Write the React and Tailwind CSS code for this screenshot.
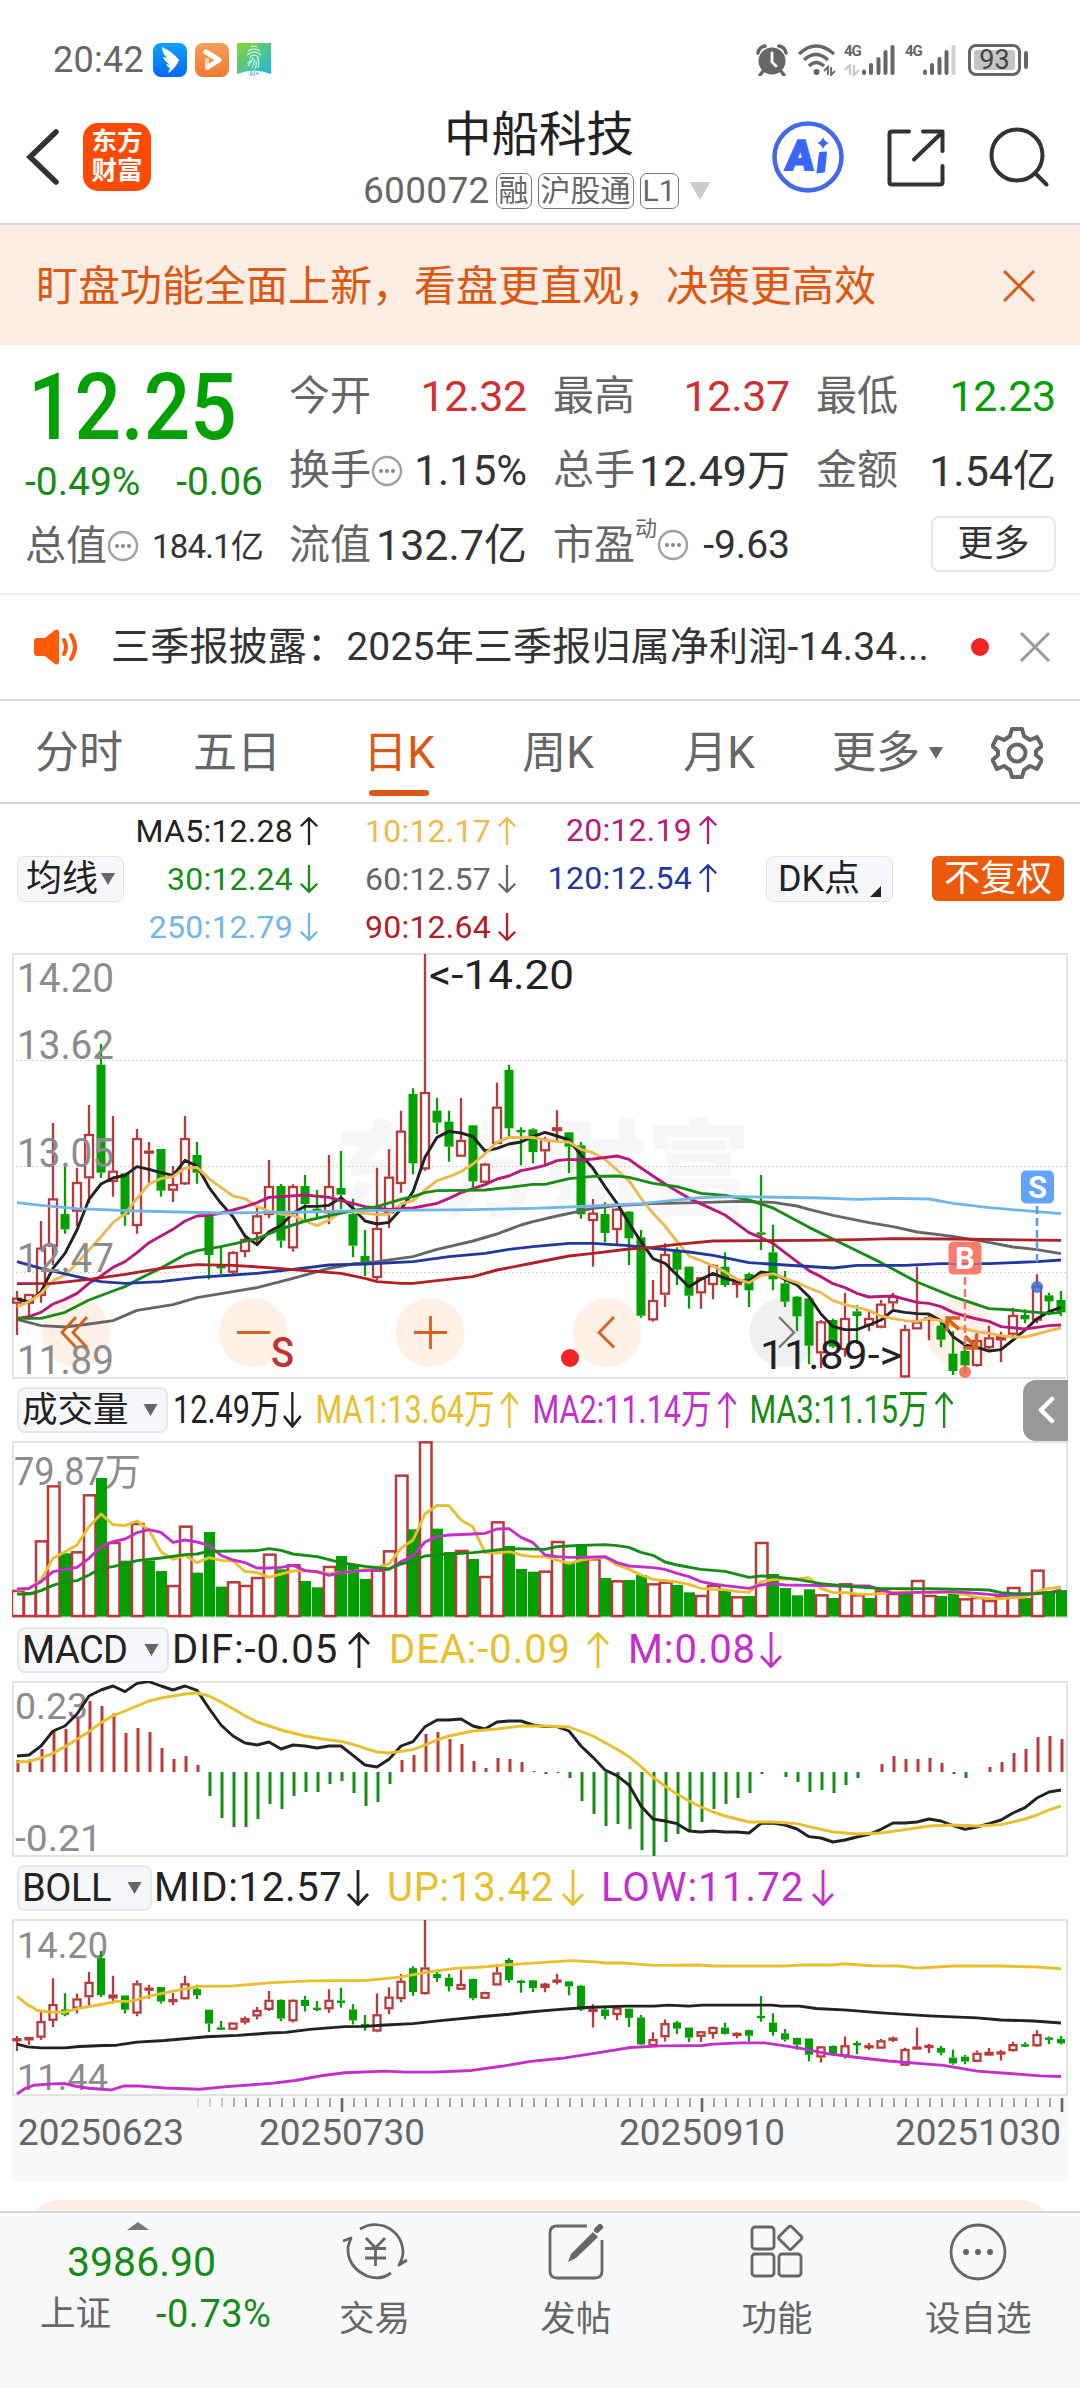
import React from 'react';

const RED = '#b93a38';
const GREEN = '#02a002';
const YELLOW = '#e8c02e';
const PURPLE = '#c42fcb';

// one slot per trading day
const dayX = (i) => 17 + i * 12;

// [high, body top, body bottom, low], third-pixel units; fifth value 1 = falling day
const candles = [
  [1053, 1073, 1091, 1185], [1062, 1062, 1091, 1130], [843, 923, 1068, 1088], [549, 775, 920, 975],
  [680, 822, 868, 881, 1], [683, 726, 815, 858], [495, 582, 715, 790], [312, 374, 698, 714, 1],
  [528, 692, 726, 770], [698, 700, 824, 857, 1], [567, 594, 858, 881], [606, 632, 639, 728],
  [627, 627, 752, 770, 1], [678, 732, 752, 786], [528, 594, 733, 735], [606, 645, 698, 731, 1],
  [824, 824, 945, 1018, 1], [922, 978, 984, 1002, 1], [934, 936, 998, 1002], [883, 897, 936, 952],
  [800, 826, 882, 910], [660, 738, 825, 835], [732, 738, 902, 923, 1], [733, 738, 925, 935],
  [705, 738, 792, 840, 1], [749, 806, 812, 838, 1], [645, 738, 820, 853], [633, 744, 764, 808, 1],
  [776, 822, 917, 952, 1], [870, 948, 972, 1008, 1], [683, 864, 1014, 1020], [628, 710, 820, 864],
  [512, 572, 732, 758], [445, 462, 670, 703, 1], [42, 456, 688, 692], [473, 512, 548, 582, 1],
  [512, 545, 620, 665, 1], [474, 600, 650, 650], [555, 556, 724, 742, 1], [668, 671, 728, 730],
  [428, 500, 612, 612], [374, 390, 565, 590, 1], [562, 570, 574, 676, 1], [565, 568, 636, 670, 1],
  [590, 597, 634, 672], [511, 562, 573, 604], [577, 577, 620, 699, 1], [606, 616, 823, 836, 1],
  [777, 818, 843, 980], [787, 822, 879, 907, 1], [804, 806, 870, 915], [814, 815, 895, 975, 1],
  [870, 892, 1127, 1133, 1], [1020, 1080, 1141, 1145], [910, 942, 1064, 1101], [922, 935, 989, 1035, 1],
  [980, 980, 1067, 1106, 1], [1010, 1012, 1060, 1106], [972, 975, 1035, 1078], [937, 980, 1035, 1041, 1],
  [1020, 1026, 1030, 1073], [998, 1002, 1051, 1101, 1], [705, 877, 884, 930, 1], [854, 937, 1018, 1051, 1],
  [993, 1030, 1085, 1101, 1], [1068, 1070, 1129, 1173, 1], [1074, 1075, 1217, 1273, 1], [1140, 1144, 1240, 1285],
  [1136, 1140, 1220, 1224, 1], [1058, 1134, 1230, 1250], [1096, 1114, 1128, 1212, 1], [1114, 1134, 1157, 1173],
  [1080, 1091, 1163, 1165], [1058, 1068, 1090, 1106], [1155, 1167, 1312, 1313], [980, 1145, 1168, 1168],
  [1120, 1132, 1136, 1201], [1140, 1157, 1199, 1222, 1], [1174, 1241, 1293, 1305, 1], [1218, 1233, 1276, 1300, 1],
  [1180, 1200, 1278, 1280], [1157, 1192, 1224, 1226], [1175, 1188, 1201, 1266], [1103, 1125, 1184, 1188],
  [1108, 1125, 1138, 1150, 1], [1003, 1037, 1142, 1150], [1058, 1066, 1084, 1126, 1], [1053, 1080, 1117, 1128, 1],
];

// [day, y] pairs
const maLines = [
  { color: '#666666', pts: '0,1138 2,1157 4,1161 6,1152 8,1142 10,1111 13,1094 15,1073 18,1055 20,1043 23,1015 26,985 28,972 30,965 33,950 35,928 38,903 40,882 42,855 43,845 45,828 48,805 50,797 53,791 57,788 60,784 63,787 65,798 66,808 68,826 71,848 73,860 75,876 78,889 81,907 83,921 85,929 87,941' },
  { color: '#222222', pts: '0,1077 1,1086 2,1055 3,985 4,940 5,870 6,778 7,732 8,714 9,706 10,680 11,688 12,698 13,706 14,661 15,678 16,742 17,790 18,830 19,888 20,914 21,875 22,856 23,820 24,799 25,799 26,796 27,773 28,805 29,843 30,852 31,847 32,808 33,755 34,652 35,592 36,574 37,579 38,590 39,633 40,625 41,612 42,606 43,590 44,577 45,588 46,600 47,645 48,685 49,740 50,790 51,850 52,905 53,956 54,970 55,1005 56,1041 57,1018 58,1000 59,1015 60,1024 61,1022 62,996 63,1000 64,1018 65,1035 66,1070 67,1122 68,1160 69,1169 70,1169 71,1155 72,1140 73,1111 74,1117 75,1121 76,1122 77,1142 78,1190 79,1215 80,1222 81,1233 82,1229 83,1200 84,1170 85,1136 86,1115 87,1102' },
  { color: '#efb94e', pts: '0,1101 1,1085 2,1060 3,1022 4,1005 5,970 6,930 7,890 8,848 9,822 10,775 11,732 12,716 13,710 14,684 15,682 16,716 17,742 18,768 19,776 20,800 21,813 22,822 23,826 24,843 25,857 26,840 27,817 28,815 29,820 30,824 31,822 32,792 33,782 34,750 35,722 36,710 37,695 38,672 39,642 40,607 41,592 42,593 43,592 44,600 45,605 46,606 47,628 48,638 49,658 50,690 51,722 52,775 53,820 54,858 55,905 56,948 57,962 58,978 59,995 60,1018 61,1028 62,1006 63,1001 64,1015 65,1028 66,1044 67,1058 68,1082 69,1094 70,1102 71,1112 72,1128 73,1136 74,1142 75,1145 76,1135 77,1142 78,1158 79,1167 80,1175 81,1180 82,1187 83,1191 84,1191 85,1182 86,1172 87,1164' },
  { color: '#b81a7c', pts: '0,1135 1,1130 2,1117 3,1092 4,1078 5,1060 6,1030 7,1008 8,982 9,965 10,938 11,908 12,888 13,868 14,843 15,828 16,826 17,819 18,810 19,800 20,788 21,772 22,770 24,765 26,772 27,782 28,790 29,800 31,808 33,804 35,790 36,775 37,758 38,746 39,734 40,717 41,708 42,692 43,685 44,676 45,662 46,658 47,660 48,657 50,648 51,658 52,684 54,732 56,775 58,808 59,825 61,878 62,893 63,910 64,938 65,965 66,992 67,1010 68,1031 69,1043 70,1060 71,1071 73,1068 75,1087 76,1090 77,1100 78,1117 79,1128 80,1137 81,1144 82,1160 84,1167 85,1162 86,1157 87,1155' },
  { color: '#188c18', pts: '0,1135 2,1135 4,1117 6,1080 8,1053 9,1040 10,1020 12,984 14,944 15,932 17,920 20,896 22,867 24,843 26,827 28,812 30,800 32,778 33,770 34,758 35,752 37,751 39,750 41,742 43,733 44,733 46,716 48,709 50,708 51,712 53,730 55,740 57,760 59,766 61,780 63,804 66,862 69,915 72,968 75,1026 78,1070 81,1106 83,1110 84,1114 86,1120 87,1118' },
  { color: '#23389f', pts: '0,965 2,985 5,1010 7,1025 9,1030 12,1025 15,1012 18,1005 20,1000 23,988 26,975 29,972 33,965 36,950 39,940 41,928 43,920 46,910 48,910 51,917 53,925 56,936 58,946 61,968 64,975 68,984 70,976 74,976 77,971 81,971 83,968 85,965 87,960' },
  { color: '#72b6e6', pts: '0,788 2,796 5,806 10,813 17,819 24,816 29,812 38,809 43,805 48,798 52,791 57,773 60,770 67,774 70,778 73,775 76,777 78,790 81,803 84,812 87,821' },
  { color: '#b02028', pts: '0,1031 3,1030 6,1018 9,1003 12,985 15,974 18,976 21,983 24,992 27,1000 29,1015 30,1025 32,1030 33,1030 35,1022 38,1010 40,990 43,969 46,948 48,940 51,927 53,922 55,913 58,903 62,902 66,901 70,899 73,896 78,897 82,899 87,901' },
];

// negative = falling volume bar
const volumes = [
  663, 670, 514, 349, -550, 547, 376, -324, 519, -572, 462, -572, -603, 648, 470, -608, -486, -650, 637, 648, 624, 554,
  -598, 586, -633, -652, 591, -558, -585, -627, 602, 544, 317, -478, 217, -476, -546, 543, -567, 621, 457, -528, -597,
  -605, 605, 516, -578, -523, 568, -624, 634, -630, -615, 643, 638, -645, -667, 678, 648, -660, 682, -678, 519, -612,
  -654, -676, -658, 676, -684, 643, 676, -684, 664, 672, -664, 633, 678, -678, -670, 688, 684, 693, 680, 654, -684, 602,
  -664, -660,
];

const volLines = [
  { color: YELLOW, pts: '0,660 1,656 2,630 3,565 4,545 5,525 6,470 7,432 8,464 9,467 10,453 11,480 12,545 13,568 14,556 15,578 16,563 17,571 18,573 19,604 20,608 21,622 22,612 23,603 24,602 25,606 26,610 27,608 28,604 29,598 30,592 31,582 32,535 33,510 34,432 35,406 36,407 37,450 38,471 39,548 40,549 41,545 42,555 43,560 44,560 45,570 46,580 47,570 48,565 49,562 50,585 51,598 52,615 53,628 54,632 55,636 56,643 57,655 58,658 59,659 60,665 61,667 62,635 63,629 64,627 65,627 66,623 67,655 68,668 69,668 70,672 71,673 72,671 73,667 74,665 76,668 78,668 79,674 80,682 81,686 82,686 83,683 84,681 85,664 86,655 87,651' },
  { color: PURPLE, pts: '0,657 1,655 2,635 3,605 4,598 5,592 6,565 7,530 8,515 9,507 10,488 11,479 12,487 13,517 14,510 15,516 16,526 17,556 18,570 19,578 20,594 21,594 22,592 23,586 24,602 25,605 26,616 27,608 28,604 29,602 31,598 32,575 33,558 34,516 35,500 36,495 38,492 39,490 40,477 41,476 42,502 43,518 44,555 45,560 46,562 47,562 49,560 50,578 51,588 53,593 54,598 55,610 56,620 57,635 58,642 59,647 61,655 62,645 63,641 64,645 66,646 69,648 71,648 73,670 75,667 78,665 80,670 82,676 84,674 86,668 87,660' },
  { color: '#168c16', pts: '0,672 1,672 2,662 3,646 4,635 5,632 6,615 7,595 8,590 9,582 10,572 12,564 14,554 15,552 16,544 20,542 21,536 22,541 23,552 25,560 27,578 29,589 31,597 32,582 33,572 34,558 36,552 38,548 40,540 41,536 44,538 45,530 46,528 47,526 49,524 50,527 51,532 52,547 53,556 54,576 55,585 57,598 59,604 60,613 61,622 62,618 63,620 65,628 67,641 69,648 72,656 76,656 80,659 81,660 82,668 83,671 85,670 87,665' },
];

const macdBars = [
  1170, 1168, 1137, 1080, 1077, 1045, 993, 1008, 1030, 1089, 1074, 1086, 1134, 1167, 1158, 1185, 1278, 1344, 1371, 1371,
  1347, 1302, 1317, 1278, 1266, 1266, 1242, 1233, 1269, 1308, 1296, 1242, 1170, 1155, 1092, 1086, 1107, 1122, 1173, 1194,
  1164, 1167, 1176, 1203, 1212, 1209, 1224, 1293, 1332, 1368, 1362, 1377, 1440, 1458, 1416, 1392, 1386, 1356, 1317, 1302,
  1284, 1269, 1212, 1206, 1221, 1236, 1266, 1260, 1269, 1245, 1224, 1206, 1182, 1158, 1167, 1167, 1164, 1179, 1212, 1224,
  1206, 1191, 1176, 1149, 1137, 1101, 1098, 1107,
];

const macdLines = [
  { color: '#222222', pts: '0,1158 1,1155 2,1128 3,1083 4,1068 5,1032 6,978 7,960 8,948 9,965 10,940 11,935 12,948 13,960 14,948 15,961 16,1015 17,1065 18,1098 19,1119 20,1125 21,1116 22,1137 23,1125 24,1128 25,1134 26,1128 27,1128 28,1156 29,1185 30,1191 31,1168 32,1128 33,1115 34,1070 35,1050 36,1050 37,1047 38,1068 39,1077 40,1056 41,1053 42,1053 43,1065 44,1070 45,1070 46,1083 47,1128 48,1162 49,1200 50,1217 51,1245 52,1308 53,1347 54,1353 55,1361 56,1383 57,1386 58,1383 59,1386 60,1386 61,1389 62,1360 63,1359 64,1365 65,1377 66,1400 67,1404 68,1416 69,1410 70,1401 71,1393 72,1378 73,1359 74,1359 75,1356 76,1347 77,1353 78,1367 79,1378 80,1371 81,1361 82,1350 83,1329 84,1313 85,1284 86,1266 87,1260' },
  { color: YELLOW, pts: '0,1176 1,1174 2,1164 3,1150 4,1130 5,1108 6,1085 7,1058 8,1037 9,1023 10,1008 11,993 12,984 13,978 14,972 15,969 16,978 17,996 18,1016 19,1037 20,1056 22,1080 24,1098 26,1110 27,1114 28,1123 29,1135 30,1146 31,1149 33,1139 34,1125 35,1110 36,1098 38,1083 40,1077 42,1068 44,1068 46,1071 48,1098 50,1138 51,1160 52,1190 53,1222 54,1248 55,1272 56,1293 57,1311 58,1326 59,1338 60,1347 61,1356 63,1356 65,1361 66,1370 68,1386 70,1392 72,1389 74,1379 76,1368 78,1365 80,1368 82,1364 84,1347 85,1335 86,1320 87,1308' },
];

const bollLines = [
  { color: YELLOW, pts: '0,405 .9,430 1.7,447 2.9,452 4,452 5.2,440 6.9,430 8.3,420 9.5,420 11.2,403 13.2,388 15.2,375 18,374 21,365 24.4,359 29,358 31.9,348 34.2,333 36.5,322 38.8,318 40.5,312 43.9,304 46.2,299 48,302 49,306 50.5,306 53,313 56.8,312 58,315 64,315 65.4,312 68,312 68.9,308 71.2,314 73.5,315 75,321 78,315 82,315 85,318 87,323' },
  { color: '#222222', pts: '0,547 .9,555 2,558 4,558 5.2,554 7.2,551 8.3,550 10,541 12.3,536 15.8,525 18.4,521 21,514 22.4,512 24.4,503 27.3,495 29,494 30.7,490 33,486 35.3,477 38.8,465 41,458 42.5,452 44.5,446 47.4,438 50.8,434 53.1,434 54.3,431 56,434 57.1,431 62.9,431 63.7,434 65.2,434 66.6,441 69.2,446 72,454 76,463 80,469 82,475 84.7,478 87,484' },
  { color: PURPLE, pts: '0,695 .6,680 1.4,669 2.9,665 4,664 4.9,672 6,678 7.9,683 8.9,671 10,671 12.3,677 15.2,681 17.5,673 21,664 23.2,655 25.5,640 27.3,632 30.7,627 32.4,630 34.7,630 37.9,625 40.5,612 42.8,598 45.4,589 48.5,572 51.1,557 53.7,552 57.1,551 58,547 60.3,543 62.3,543 64,552 65.4,560 67.5,575 69.7,585 72.6,597 77.2,610 80,627 83,635 85.3,641 87,643' },
];

function Lines({ lines, top, unit = 3 }) {
  return lines.map((l, k) => (
    <polyline
      key={k}
      fill="none"
      stroke={l.color}
      strokeWidth="2.9"
      strokeLinejoin="round"
      points={l.pts
        .split(' ')
        .map((p) => {
          const [d, y] = p.split(',').map(Number);
          return `${dayX(d)},${top + y / unit}`;
        })
        .join(' ')}
    />
  ));
}

function Candles({ y, small }) {
  return candles.map(([hi, top, bottom, lo, down], i) => {
    const x = dayX(i);
    const color = down ? GREEN : RED;
    const w = small ? 8 : 9;
    const h = Math.max(y(bottom) - y(top), 2.4);
    return (
      <g key={i} stroke={color} strokeWidth="2.3">
        <path d={`M${x} ${y(hi)}V${y(top)}M${x} ${y(bottom)}V${y(lo)}`} />
        {down ? (
          <rect x={x - w / 2} y={y(top)} width={w} height={h} fill={color} stroke="none" />
        ) : (
          <rect x={x - w / 2 + 0.5} y={y(top) + 1} width={w - 1} height={Math.max(h - 2, 1)} fill="#fff" />
        )}
      </g>
    );
  });
}

const Frame = ({ y, h }) => (
  <rect x="13" y={y + 1} width="1054" height={h - 2} fill="none" stroke="#e2e2e2" strokeWidth="2" />
);

const Label = ({ x = 17, y, w, size = 40, fill = '#8c8c8c', children }) => (
  <text x={x} y={y} fontSize={size} fill={fill} textLength={w} lengthAdjust="spacingAndGlyphs">
    {children}
  </text>
);

const Arrow = ({ down, className = 'w-[22px] h-9' }) => (
  <svg viewBox="0 0 22 36" preserveAspectRatio="none" className={className} fill="none" stroke="currentColor" strokeWidth="2.8">
    {down ? <path d="M11 0V34M1 24L11 34.500L21 24" /> : <path d="M11 36V2M1 12L11 1.500L21 12" />}
  </svg>
);

const Caret = ({ className }) => (
  <svg viewBox="0 0 14 12" className={className} fill="currentColor">
    <path d="M0 0H14L7 12Z" />
  </svg>
);

const Info = () => (
  <svg viewBox="0 0 32 32" className="w-8 h-8 shrink-0" fill="none" stroke="#a0a0a0" strokeWidth="2.4">
    <circle cx="16" cy="16" r="14" />
    <g fill="#888" stroke="none">
      <circle cx="10" cy="16" r="2" />
      <circle cx="16" cy="16" r="2" />
      <circle cx="22" cy="16" r="2" />
    </g>
  </svg>
);

const Signal = ({ weak }) => (
  <svg viewBox="0 0 34 32" className="w-[34px] h-8" strokeWidth="4" strokeLinecap="round" stroke="#666">
    <path d="M3 27.500V29M10 21V29M17.500 15V29M24.500 8V29" />
    <path d="M31.500 3V29" stroke={weak ? '#d0d0d0' : '#666'} />
  </svg>
);

function StatusBar() {
  return (
    <div className="h-[100px] pt-5 pl-[53px] pr-[52px] flex items-center justify-between text-[#666]">
      <div className="flex items-center">
        <span className="text-[36px] w-[100px] tracking-[0.3px]">20:42</span>
        <svg viewBox="0 0 34 34" className="w-[34px] h-[34px]">
          <defs>
            <linearGradient id="wing" x2="0" y2="1">
              <stop stopColor="#0aa2ff" />
              <stop offset="1" stopColor="#0a68f4" />
            </linearGradient>
          </defs>
          <rect width="34" height="34" rx="8" fill="url(#wing)" />
          <path d="M9 4Q20 9 26 17Q24 23 17 29L15 30L17 25Q14 24 13 21L17 22Q11 18 10 14L14 15Q9 10 9 4Z" fill="#fff" />
        </svg>
        <svg viewBox="0 0 34 34" className="w-[34px] h-[34px] ml-2">
          <defs>
            <linearGradient id="video" x2="0" y2="1">
              <stop stopColor="#fb9f58" />
              <stop offset="1" stopColor="#f27834" />
            </linearGradient>
          </defs>
          <rect width="34" height="34" rx="8" fill="url(#video)" />
          <path d="M12 15V25L18 21" fill="none" stroke="#fcd3b6" strokeWidth="4" strokeLinejoin="round" />
          <path d="M11 9L24 17L13 24" fill="none" stroke="#fff" strokeWidth="5" strokeLinejoin="round" strokeLinecap="round" />
        </svg>
        <svg viewBox="0 0 34 34" className="w-[34px] h-[34px] ml-2">
          <defs>
            <linearGradient id="print" x2="1" y2="1">
              <stop stopColor="#8dd32e" />
              <stop offset="1" stopColor="#18b8e6" />
            </linearGradient>
          </defs>
          <path d="M0 0H34V31Q17 24 0 31Z" fill="url(#print)" />
          <g fill="none" stroke="#e4fbf4" strokeWidth="1.100">
            <path d="M14 4Q17 2 20 4M11 8Q17 4 23 8M10 12Q17 6 24 12M12 15Q17 9 22 15M11 23Q15 19 16 14M15 25Q18 20 17 16M20 15Q23 18 21 25M14 17Q12 20 10 20M18 26Q20 22 19 18" />
          </g>
          <text x="17" y="32.500" textAnchor="middle" fontSize="6.500" fill="#279fd0">AI+</text>
        </svg>
      </div>
      <div className="flex items-center">
        <svg viewBox="0 0 32 32" className="w-8 h-8" fill="#666" stroke="#666">
          <circle cx="16" cy="17" r="13.500" stroke="none" />
          <path d="M2 9Q3 3 9 2M30 9Q29 3 23 2M8 26L4 31M24 26L28 31" fill="none" strokeWidth="3.500" strokeLinecap="round" />
          <path d="M16 9V18L20 22" fill="none" stroke="#fff" strokeWidth="2.800" strokeLinecap="round" />
        </svg>
        <svg viewBox="0 0 38 32" className="w-[38px] h-8 ml-2.5" fill="none" stroke="#666" strokeWidth="3.200">
          <path d="M1 10Q18 -6 36 10M6 16Q18 5 30 16M11 22Q18 15 26 22" />
          <circle cx="18.500" cy="28" r="3" fill="#666" stroke="none" />
          <path d="M26 27L30 23V31M37 27L33 31V23" strokeWidth="1.800" />
        </svg>
        <div className="ml-2 flex flex-col w-[17px] h-8">
          <span className="text-[15px] leading-[14px] font-bold tracking-[-1px]">4G</span>
          <svg viewBox="0 0 16 12" className="w-4 h-3 mt-1.5" fill="none" stroke="#ccc" strokeWidth="2.400">
            <path d="M1 6L6 1V11M15 6L10 11V1" />
          </svg>
        </div>
        <Signal />
        <span className="ml-[10px] w-[17px] self-start text-[15px] leading-[14px] font-bold tracking-[-1px]">4G</span>
        <Signal weak />
        <div className="ml-3 w-[53px] h-8 rounded-[8px] border-[3px] border-[#666] p-[3px]">
          <div className="w-full h-full rounded-[3px] bg-[#c4c4c4] flex items-center justify-center text-[27px] leading-none text-[#444]">
            93
          </div>
        </div>
        <span className="ml-[3px] w-1 h-[18px] rounded bg-[#666]" />
      </div>
    </div>
  );
}

const Tag = ({ children }) => (
  <span className="ml-[6px] h-9 px-[2px] rounded-[7px] border-[1.5px] border-[#777] text-[30px] leading-[33px] text-[#666]">
    {children}
  </span>
);

function Header() {
  return (
    <div className="h-[125px] pl-[26px] pr-[29px] flex items-start border-b-2 border-[#d8d8d8]">
      <svg viewBox="0 0 34 58" className="w-[34px] h-[58px] mt-[28px]" fill="none" stroke="#333" strokeWidth="5.500" strokeLinecap="round">
        <path d="M30 4L4 29L30 54" strokeLinejoin="miter" />
      </svg>
      <div className="ml-[23px] mt-[23px] w-[68px] h-[68px] rounded-[15px] bg-[#ff4a04] text-white text-[25.500px] leading-[29px] font-bold text-center pt-[4px]">
        东方
        <br />
        财富
      </div>
      <div className="ml-[212px] w-[352px] flex flex-col pt-[2px]">
        <div className="text-[47.500px] text-[#222] leading-[66px] pl-[81px]">中船科技</div>
        <div className="flex items-center h-[46px] text-[#666]">
          <span className="text-[37px] tracking-[0.3px]">600072</span>
          <Tag>融</Tag>
          <Tag>沪股通</Tag>
          <Tag>L1</Tag>
          <Caret className="ml-[10px] w-[22px] h-[18px] text-[#ccc]" />
        </div>
      </div>
      <svg viewBox="0 0 72 72" className="ml-[57px] mt-[21px] w-[72px] h-[72px]" fill="none">
        <circle cx="36" cy="36" r="33.500" stroke="#4569e6" strokeWidth="4.500" />
        <text x="13" y="49" fontSize="42" fontWeight="900" fill="#3a66fb" stroke="#3a66fb" strokeWidth="2" textLength="28" lengthAdjust="spacingAndGlyphs" transform="skewX(-5) translate(4 0)">
          A
        </text>
        <path d="M48 32L54 31.500L52 50.500L45.500 51.500Z" fill="#3a66fb" stroke="#3a66fb" strokeWidth="2" strokeLinejoin="round" />
        <path d="M51 16Q52.500 21 57 22Q52.500 23.500 51 28Q49.500 23.500 45 22Q49.500 21 51 16Z" fill="#3a66fb" />
      </svg>
      <svg viewBox="0 0 60 60" className="ml-[41px] mt-[28px] w-[60px] h-[60px]" fill="none" stroke="#333" strokeWidth="4" strokeLinecap="round" strokeLinejoin="round">
        <path d="M24 3.500H7Q4.500 3.500 4.500 6V54Q4.500 56.500 7 56.500H55Q57.500 56.500 57.500 54V38" />
        <path d="M38 3.500H57.500V23M56.500 5L29 31.500" />
      </svg>
      <svg viewBox="0 0 62 62" className="ml-[43px] mt-[26px] w-[62px] h-[62px]" fill="none" stroke="#333" strokeWidth="4" strokeLinecap="round">
        <circle cx="29" cy="29" r="25.500" />
        <path d="M47 47L58.500 58.500" />
      </svg>
    </div>
  );
}

const Stat = ({ label, info, sup, value, className = 'text-[43px] text-[#333]' }) => (
  <div className="h-[74.500px] flex items-center justify-between text-[41px]">
    <span className="flex items-center text-[#666]">
      {label}
      {sup && <sup className="text-[22px] -top-4">{sup}</sup>}
      {info && <Info />}
    </span>
    <span className={`whitespace-nowrap ${className}`}>{value}</span>
  </div>
);

function Quote() {
  return (
    <div className="h-[250px] pt-[14px] pl-[25px] flex items-start border-b-2 border-[#efefef]">
      <div className="w-[238px]">
        <div className="h-[95px] pt-[2px] flex items-center pl-[3px]">
          <span className="text-[93px] font-medium text-[#02a002] origin-left scale-x-[0.88] leading-none">12.25</span>
        </div>
        <div className="h-[55px] pt-[2px] flex items-center justify-between text-[39px] text-[#168c16]">
          <span>-0.49%</span>
          <span>-0.06</span>
        </div>
        <Stat label="总值" info value="184.1亿" className="text-[33px] tracking-[-0.8px] text-[#333]" />
      </div>
      <div className="ml-[26px] w-[238px]">
        <Stat label="今开" value="12.32" className="text-[43px] tracking-[-0.3px] text-[#d22f2f]" />
        <Stat label="换手" info value="1.15%" className="text-[42px] text-[#333]" />
        <Stat label="流值" value="132.7亿" />
      </div>
      <div className="ml-[26px] w-[237px]">
        <Stat label="最高" value="12.37" className="text-[43px] tracking-[-0.3px] text-[#d22f2f]" />
        <Stat label="总手" value="12.49万" />
        <Stat label="市盈" sup="动" info value="-9.63" className="text-[39px] text-[#333]" />
      </div>
      <div className="ml-[26px] w-[240px]">
        <Stat label="最低" value="12.23" className="text-[43px] tracking-[-0.3px] text-[#02a002]" />
        <Stat label="金额" value="1.54亿" />
        <button className="ml-auto mt-[8px] block w-[125px] h-[56px] rounded-lg border-2 border-[#e8e8e8] text-[36px] leading-[50px] text-[#333]">
          更多
        </button>
      </div>
    </div>
  );
}

function News() {
  return (
    <div className="h-[106px] pl-[33px] pr-[29px] flex items-center border-b-2 border-[#d8d8d8]">
      <svg viewBox="0 0 46 38" className="w-[46px] h-[38px]" fill="#ff5a0a">
        <path d="M4 10H12L22 2Q26 0 26 5V33Q26 38 22 36L12 28H4Q1 28 1 25V13Q1 10 4 10Z" />
        <path d="M31 12Q35 19 31 26M38 7Q46 19 38 31" fill="none" stroke="#ff5a0a" strokeWidth="4" strokeLinecap="round" />
      </svg>
      <span className="ml-[32px] w-[840px] text-[39px] text-[#333] tracking-[0.2px] whitespace-nowrap">
        三季报披露：2025年三季报归属净利润-14.34...
      </span>
      <span className="ml-5 w-[18px] h-[18px] rounded-full bg-[#f22424]" />
      <svg viewBox="0 0 32 32" className="ml-auto w-8 h-8" stroke="#999" strokeWidth="3">
        <path d="M2 2L30 30M30 2L2 30" />
      </svg>
    </div>
  );
}

function Tabs() {
  return (
    <div className="h-[103px] pt-[3px] flex items-center text-[44px] text-[#666] border-b-2 border-[#d8d8d8]">
      <span className="w-[158px] text-center">分时</span>
      <span className="w-[158px] text-center">五日</span>
      <span className="w-[166px] h-full text-center text-[#dc5812] flex flex-col items-center justify-end">
        日K
        <span className="mt-[4px] mb-[6px] w-[60px] h-[6px] rounded-full bg-[#dc5812]" />
      </span>
      <span className="w-[152px] text-center">周K</span>
      <span className="w-[170px] text-center">月K</span>
      <span className="ml-[28px]">更多</span>
      <Caret className="ml-2 w-4 h-3" />
      <svg viewBox="0 0 52 54" className="ml-[47px] w-[52px] h-[54px]" fill="none" stroke="#666" strokeWidth="4" strokeLinejoin="round">
        <path d="M21 3H31L33 10L39 14L46 11L51 20L45 25V29L51 34L46 43L39 40L33 44L31 51H21L19 44L13 40L6 43L1.500 34L7 29V25L1.500 20L6 11L13 14L19 10Z" />
        <circle cx="26" cy="27" r="8.500" />
      </svg>
    </div>
  );
}

const Ma = ({ color, down, children }) => (
  <span className={`flex items-center justify-end h-12 tracking-[0.25px] ${color}`}>
    {children}
    <Arrow down={down} className="ml-[7px] w-[18px] h-7" />
  </span>
);

function MaInfo() {
  return (
    <div className="h-[149px] pl-[17px] pr-4 flex items-center text-[32px]">
      <button className="w-[107px] h-[46px] rounded-lg border border-[#e2e3e6] bg-[#f6f7fa] text-[36px] leading-[42px] text-[#222] flex items-center justify-center gap-[3px]">
        均线
        <Caret className="w-[14px] h-[12px] text-[#666]" />
      </button>
      <div className="w-[194px]">
        <Ma color="text-[#222]">MA5:12.28</Ma>
        <Ma color="text-[#188c18]" down>30:12.24</Ma>
        <Ma color="text-[#72b6e6]" down>250:12.79</Ma>
      </div>
      <div className="w-[198px]">
        <Ma color="text-[#efb94e]">10:12.17</Ma>
        <Ma color="text-[#666]" down>60:12.57</Ma>
        <Ma color="text-[#b02028]" down>90:12.64</Ma>
      </div>
      <div className="w-[201px] self-start pt-[2px]">
        <Ma color="text-[#b81a7c]">20:12.19</Ma>
        <Ma color="text-[#23389f]">120:12.54</Ma>
      </div>
      <button className="ml-[49px] w-[127px] h-[46px] rounded-lg border border-[#e2e3e6] bg-[#f6f7fa] text-[36px] leading-[42px] text-[#222] flex items-center justify-center">
        DK点
        <svg viewBox="0 0 11 11" className="ml-2.5 mb-1 w-[11px] h-[11px] self-end">
          <path d="M11 0V11H0Z" fill="#222" />
        </svg>
      </button>
      <button className="ml-auto w-[132px] h-[45px] rounded-md bg-[#eb5a0a] text-[36px] leading-[42px] text-white">不复权</button>
    </div>
  );
}

function KChart() {
  const y = (v) => 940 + v / 3;
  return (
    <svg viewBox="12 953 1056 426" className="block ml-3 w-[1056px] h-[426px]">
      <text x="335" y="1208" fontSize="104" fontWeight="900" fill="#f7f7f7">东方财富</text>
      <Frame y={953} h={426} />
      <path d="M12 1060.500H1068M12 1166.500H1068M12 1272.500H1068" stroke="#d4d4d4" strokeWidth="1" strokeDasharray="2 2" />
      {[76, 253, 430, 607, 784, 961].map((x) => (
        <circle key={x} cx={x} cy="1332.500" r="34.500" fill={x === 784 ? '#f0f0f0' : '#fff0e8'} />
      ))}
      <Candles y={y} />
      <Lines lines={maLines} top={940} />
      <Label y={991.5} w={97}>14.20</Label>
      <Label y={1059} w={97}>13.62</Label>
      <Label y={1166.5} w={97}>13.05</Label>
      <Label y={1272} w={97}>12.47</Label>
      <Label y={1374} w={97}>11.89</Label>
      <Label x={429} y={989} w={145} fill="#222">{'<-14.20'}</Label>
      <g fill="none" stroke="#d9611c" strokeWidth="2.800">
        <path d="M76 1317L62 1332.500L76 1347.500M87 1317L73 1332.500L87 1347.500" />
        <path d="M237 1332.500H270M414 1332.500H447M430.500 1316V1349" />
        <path d="M614 1317L599 1332.500L614 1347.500" />
        <path d="M960 1318H947V1331M947 1318L959 1329.500M976.500 1334V1348H963M976.500 1348L965 1336" strokeWidth="3.500" />
      </g>
      <path d="M779 1317L794 1332.500L779 1347.500" fill="none" stroke="#777" strokeWidth="2.400" />
      <Label x={760} y={1369} w={142} fill="#222">{'11.89->'}</Label>
      <text x="271" y="1366.500" fontSize="42" fontWeight="500" fill="#c23430" textLength="23" lengthAdjust="spacingAndGlyphs">S</text>
      <circle cx="570" cy="1358" r="9" fill="#f22424" />
      <path d="M1037 1206V1262" stroke="#5b98ee" strokeWidth="2.500" strokeDasharray="8 4" />
      <rect x="1021" y="1170.500" width="33" height="33" rx="5" fill="#64a3fb" />
      <text x="1037.500" y="1198" fontSize="31" fontWeight="700" fill="#fff" textAnchor="middle">S</text>
      <circle cx="1037" cy="1287" r="6" fill="#3e6fdc" opacity=".85" />
      <path d="M965 1277V1350" stroke="#ee7766" strokeWidth="2.500" strokeDasharray="8 4" />
      <rect x="948.500" y="1241.500" width="33" height="33" rx="5" fill="#fb7c6c" />
      <path d="M950 1264H980" stroke="#a06da0" strokeWidth="2" />
      <text x="965" y="1269" fontSize="31" fontWeight="700" fill="#fff" textAnchor="middle">B</text>
      <circle cx="965" cy="1372" r="6" fill="#f26a50" opacity=".9" />
    </svg>
  );
}

const Picker = ({ className, children }) => (
  <button className={`h-[46px] shrink-0 rounded-lg border-2 border-[#e6e7ea] bg-[#f6f7fa] text-[#222] leading-[42px] pl-[3px] pr-[8px] flex items-center justify-between ${className}`}>
    {children}
    <Caret className="w-[15px] h-[12px] text-[#666]" />
  </button>
);

function VolumeChart() {
  return (
    <>
      <div className="h-[62px] pl-[17px] pr-3 flex items-center">
        <Picker className="w-[151px] text-[35.500px]">成交量</Picker>
        <div className="ml-[5px] w-[850px] text-[39.500px]">
          <div className="w-max flex items-center origin-left scale-x-[0.775] whitespace-nowrap">
            <span className="w-[166px] flex items-center justify-between text-[#222]">12.49万<Arrow down className="w-6 h-9" /></span>
            <span className="ml-[18px] w-[262px] flex items-center justify-between text-[#e8c02e]">MA1:13.64万<Arrow className="w-6 h-9" /></span>
            <span className="ml-[18px] w-[263px] flex items-center justify-between text-[#c42fcb]">MA2:11.14万<Arrow className="w-6 h-9" /></span>
            <span className="ml-[17px] w-[263px] flex items-center justify-between text-[#168c16]">MA3:11.15万<Arrow className="w-6 h-9" /></span>
          </div>
        </div>
        <div className="w-[45px] h-[61px] rounded-l-[13px] bg-[#999] flex items-center justify-center">
          <svg viewBox="0 0 18 28" className="w-[18px] h-7" fill="none" stroke="#fff" strokeWidth="4.500" strokeLinecap="round" strokeLinejoin="round">
            <path d="M15 3L4 14L15 25" />
          </svg>
        </div>
      </div>
      <svg viewBox="12 1441 1056 177" className="block ml-3 w-[1056px] h-[177px]">
        <Frame y={1441} h={177} />
        <Label x={14} y={1485} w={127} size={38}>79.87万</Label>
        {volumes.map((v, i) => {
          const top = 1370 + Math.abs(v) / 3;
          return v < 0 ? (
            <rect key={i} x={dayX(i) - 5} y={top} width="11" height={1616.5 - top} fill={GREEN} />
          ) : (
            <rect key={i} x={dayX(i) - 5} y={top} width="11.500" height={1616 - top} fill="#fff" stroke={RED} strokeWidth="2.500" />
          );
        })}
        <Lines lines={volLines} top={1370} />
      </svg>
    </>
  );
}

function MacdChart() {
  return (
    <>
      <div className="h-[63px] pl-[17px] flex items-center text-[40px] tracking-[0.9px]">
        <Picker className="w-[152px] text-[38px] tracking-[-0.6px]">MACD</Picker>
        <span className="ml-[3px] w-[198px] flex items-center justify-between text-[#222]">DIF:-0.05<Arrow /></span>
        <span className="ml-[19px] w-[220px] flex items-center justify-between text-[#e8c02e]">DEA:-0.09<Arrow /></span>
        <span className="ml-[19px] w-[154px] flex items-center justify-between text-[#c42fcb]">M:0.08<Arrow down /></span>
      </div>
      <svg viewBox="12 1681 1056 176" className="block ml-3 w-[1056px] h-[176px]">
        <Frame y={1681} h={176} />
        <Label x={15} y={1719} w={73} size={37}>0.23</Label>
        <Label x={15} y={1851} w={87} size={37}>-0.21</Label>
        {macdBars.map((v, i) => (
          <path key={i} d={`M${dayX(i) + 1} 1772V${1370 + v / 3}`} stroke={v > 1206 ? '#168c16' : RED} strokeWidth="3" />
        ))}
        <Lines lines={macdLines} top={1370} />
      </svg>
    </>
  );
}

function BollChart() {
  const y = (v) => 1920 + (v - 42) * 0.1147;
  const ticks = [];
  for (let i = 15; i < 88; i++) ticks.push(i);
  return (
    <>
      <div className="h-[62px] pl-[17px] flex items-center text-[40px] tracking-[0.7px]">
        <Picker className="w-[135px] text-[38px] tracking-[-0.4px]">BOLL</Picker>
        <span className="ml-[2px] w-[215px] flex items-center justify-between text-[#222]">MID:12.57<Arrow down /></span>
        <span className="ml-[18px] w-[197px] flex items-center justify-between text-[#e8c02e]">UP:13.42<Arrow down /></span>
        <span className="ml-[17px] w-[233px] flex items-center justify-between text-[#c42fcb] tracking-[1.100px]">LOW:11.72<Arrow down /></span>
      </div>
      <svg viewBox="12 1919 1056 263" className="block ml-3 w-[1056px] h-[263px]">
        <rect x="12" y="2096" width="1056" height="86" fill="#f7f8fa" />
        <Frame y={1919} h={177} />
        <Label y={1958} w={91} size={37}>14.20</Label>
        <Label y={2090} w={91} size={37}>11.44</Label>
        <Candles y={y} small />
        <Lines lines={bollLines} top={1860} unit={2.97} />
        {ticks.map((i) => (
          <path
            key={i}
            d={`M${dayX(i) + 1} 2098V${i % 30 === 27 ? 2112 : 2107}`}
            stroke={i % 30 === 27 ? '#666' : '#999'}
            strokeWidth={i % 30 === 27 ? 2.6 : 1.8}
            opacity={Math.min(1, (i - 13) / 6)}
          />
        ))}
        <Label x={18} y={2145} w={166} size={36.5} fill="#666">20250623</Label>
        <Label x={259} y={2145} w={166} size={36.5} fill="#666">20250730</Label>
        <Label x={619} y={2145} w={166} size={36.5} fill="#666">20250910</Label>
        <Label x={895} y={2145} w={166} size={36.5} fill="#666">20251030</Label>
      </svg>
    </>
  );
}

const NavItem = ({ label, children }) => (
  <div className="flex-1 flex flex-col items-center pt-[7px]">
    <svg viewBox="0 0 66 64" className="w-[66px] h-16" fill="none" stroke="#666" strokeWidth="2.800">
      {children}
    </svg>
    <span className="mt-[9px] text-[35.500px] leading-[52px]">{label}</span>
  </div>
);

function BottomNav() {
  return (
    <div className="h-[177px] border-t-2 border-[#d4d6d8] bg-[#f6f8fa] flex text-[#666]">
      <div className="w-[274px] pt-[9px] flex flex-col">
        <svg viewBox="0 0 22 8" className="ml-[127px] w-[22px] h-2">
          <path d="M0 8L11 0L22 8Z" fill="#777" />
        </svg>
        <span className="mt-[8px] pl-[67px] text-[41px] leading-[48px] text-[#168c16]">3986.90</span>
        <div className="mt-[4px] pl-[40px] flex items-center leading-[48px]">
          <span className="text-[35.500px]">上证</span>
          <span className="ml-[45px] text-[38px] tracking-[0.5px] text-[#168c16]">-0.73%</span>
        </div>
      </div>
      <div className="w-[805px] flex">
        <NavItem label="交易">
          <path d="M18 9Q29 2 42 6Q60 13 61 32Q61 38 57 45L65 40M49 53Q38 61 25 56Q5 47 6 27Q7 23 9 18L1 21" strokeLinejoin="round" />
          <path d="M24 18L33.500 28L43 18M33.500 28V46M23 28.500H44M23 38H44" />
        </NavItem>
        <NavItem label="发帖">
          <path d="M44 6H14Q7 6 7 13V51Q7 58 14 58H52Q59 58 59 51V20" />
          <path d="M50 12L55 17L33 38L25 42L28 34Z" fill="#666" stroke="none" />
          <path d="M54 10L57 7" strokeWidth="6" strokeLinecap="round" />
        </NavItem>
        <NavItem label="功能">
          <rect x="8" y="7" width="22" height="22" rx="3" />
          <rect x="8" y="34" width="22" height="22" rx="3" />
          <rect x="35" y="34" width="22" height="22" rx="3" />
          <rect x="37.500" y="9" width="17.500" height="17.500" rx="2" transform="rotate(45 46.250 17.750)" />
        </NavItem>
        <NavItem label="设自选">
          <circle cx="33" cy="32" r="27" />
          <g fill="#666" stroke="none">
            <circle cx="21" cy="32" r="3" />
            <circle cx="33" cy="32" r="3" />
            <circle cx="45" cy="32" r="3" />
          </g>
        </NavItem>
      </div>
    </div>
  );
}

export default function App() {
  return (
    <div className="w-[1080px] h-[2388px] overflow-hidden bg-white flex flex-col font-['Roboto','Noto_Sans_CJK_SC',sans-serif]">
      <StatusBar />
      <Header />
      <div className="h-[120px] pt-[2px] pl-[36px] pr-[45px] flex items-center justify-between bg-[#fcede4] text-[#dc5812] text-[42px]">
        盯盘功能全面上新，看盘更直观，决策更高效
        <svg viewBox="0 0 32 32" className="w-8 h-8" stroke="currentColor" strokeWidth="3">
          <path d="M1 1L31 31M31 1L1 31" />
        </svg>
      </div>
      <Quote />
      <News />
      <Tabs />
      <MaInfo />
      <KChart />
      <VolumeChart />
      <MacdChart />
      <BollChart />
      <div className="h-[29px] px-7 pt-[18px] overflow-hidden">
        <div className="h-16 rounded-[34px] bg-[#fcede4]" />
      </div>
      <BottomNav />
    </div>
  );
}
